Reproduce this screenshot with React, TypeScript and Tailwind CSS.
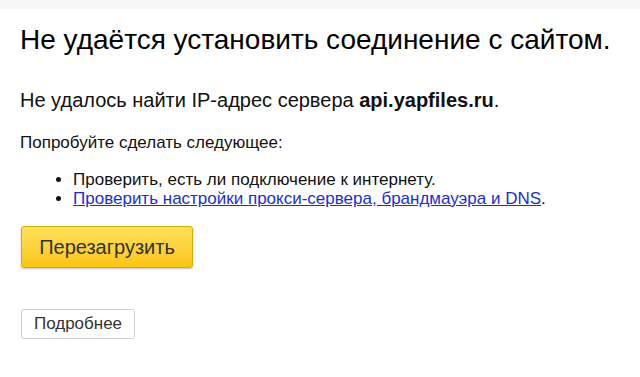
export default function App() {
  return (
    <div className="min-h-[377px] bg-white font-['Liberation_Sans',Arial,sans-serif] text-[#111]">
      <div className="h-[9px] bg-[#f7f7f7]" />
      <div className="px-5">
        <h1 className="mt-[15px] text-[28px] leading-[32px] text-black">
          Не удаётся установить соединение с сайтом.
        </h1>
        <p className="mt-[33px] text-[20px] leading-[22px]">
          Не удалось найти IP-адрес сервера <b>api.yapfiles.ru</b>.
        </p>
        <p className="mt-[22px] text-[17px] leading-[19px]">Попробуйте сделать следующее:</p>
        <ul className="mt-[18px] list-disc pl-[53px] text-[17px] leading-[19px]">
          <li>Проверить, есть ли подключение к интернету.</li>
          <li>
            <a href="#" className="text-[#1a2fd0] underline">
              Проверить настройки прокси-сервера, брандмауэра и DNS
            </a>
            .
          </li>
        </ul>
        <button className="mt-[18px] ml-px flex h-[42px] w-[172px] items-center justify-center rounded-[3px] border border-[#d8ab0c] bg-gradient-to-b from-[#ffe257] to-[#fbc409] text-[20px] text-[#333] shadow-[0_1px_2px_rgba(0,0,0,0.25)]">
          Перезагрузить
        </button>
        <button className="mt-[41px] ml-px flex h-[30px] w-[114px] items-center justify-center rounded-[3px] border border-[#d0d0d0] bg-white text-[17px] text-[#333]">
          Подробнее
        </button>
      </div>
    </div>
  );
}
